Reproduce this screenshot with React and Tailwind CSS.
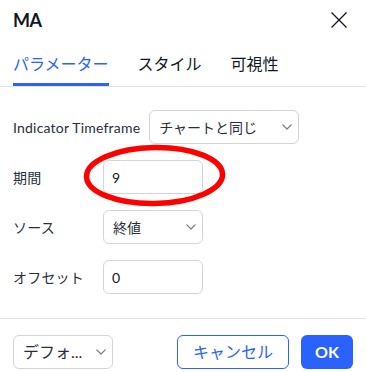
import React from "react";

const font = { fontFamily: 'Lato, "Noto Sans CJK JP", sans-serif' };

function Chevron() {
  return (
    <svg width="10" height="6" viewBox="0 0 10 6" fill="none" className="shrink-0">
      <path d="M0.8 0.8 L5 5 L9.2 0.8" stroke="#787b86" strokeWidth="1.2" strokeLinecap="round" strokeLinejoin="round" />
    </svg>
  );
}

function Select({ value, className = "", textClass = "text-[14px]" }) {
  return (
    <div className={`h-[34px] flex items-center justify-between border border-[#d1d4dc] rounded-[6px] pl-[9px] pr-[6px] text-[#2a2e39] ${className}`}>
      <span className={textClass}>{value}</span>
      <Chevron />
    </div>
  );
}

function Input({ value }) {
  return (
    <div className="h-[34px] w-[100px] flex items-center border border-[#d1d4dc] rounded-[6px] px-[8px] text-[14px] text-[#131722]">
      {value}
    </div>
  );
}

function Row({ label, children }) {
  return (
    <div className="flex items-center gap-[9px] h-[34px]">
      <div className="min-w-[81px] text-[14px] tracking-[0.2px] text-[#2a2e39]">{label}</div>
      {children}
    </div>
  );
}

export default function App() {
  return (
    <div className="relative w-[366px] h-[372px] bg-white overflow-hidden" style={font}>
      <div className="h-[40px] flex items-center justify-between pl-[13px] pr-[18px]">
        <span className="text-[18px] font-bold text-[#131722] leading-none tracking-[-0.5px]">MA</span>
        <svg width="18" height="18" viewBox="0 0 18 18" fill="none">
          <path d="M1.5 1.5 L16.5 16.5 M16.5 1.5 L1.5 16.5" stroke="#131722" strokeWidth="1.3" />
        </svg>
      </div>
      <div className="mt-[3px] h-[44px] flex gap-[29px] px-[13px] border-b border-[#e0e3eb]">
        <div className="h-full flex items-center pt-[2px] border-b-[3px] border-[#2962ff] text-[16px] text-[#2962ff]">パラメーター</div>
        <div className="h-full flex items-center pt-[2px] border-b-[3px] border-transparent text-[16px] text-[#131722]">スタイル</div>
        <div className="h-full flex items-center pt-[2px] border-b-[3px] border-transparent text-[16px] text-[#131722]">可視性</div>
      </div>
      <div className="flex flex-col gap-[16px] pt-[23px] pb-[24px] px-[13px] border-b border-[#e0e3eb]">
        <Row label="Indicator Timeframe">
          <Select value="チャートと同じ" className="w-[150px]" />
        </Row>
        <Row label="期間">
          <Input value="9" />
        </Row>
        <Row label="ソース">
          <Select value="終値" className="w-[100px]" />
        </Row>
        <Row label="オフセット">
          <Input value="0" />
        </Row>
      </div>
      <div className="flex items-center justify-between pt-[16px] px-[13px]">
        <Select value="デフォ..." className="w-[100px]" textClass="text-[16px]" />
        <div className="flex gap-[12px]">
          <div className="h-[34px] w-[112px] flex items-center justify-center border border-[#2962ff] rounded-[6px] text-[16px] text-[#2962ff]">キャンセル</div>
          <div className="h-[34px] w-[52px] flex items-center justify-center bg-[#2962ff] rounded-[6px] text-[16px] font-bold text-white">OK</div>
        </div>
      </div>
      <svg className="absolute left-0 top-0 pointer-events-none" width="366" height="372">
        <ellipse cx="154.5" cy="175.5" rx="68" ry="28" fill="none" stroke="#ff0000" strokeWidth="5.5" transform="rotate(-1 154.5 175.5)" />
      </svg>
    </div>
  );
}
